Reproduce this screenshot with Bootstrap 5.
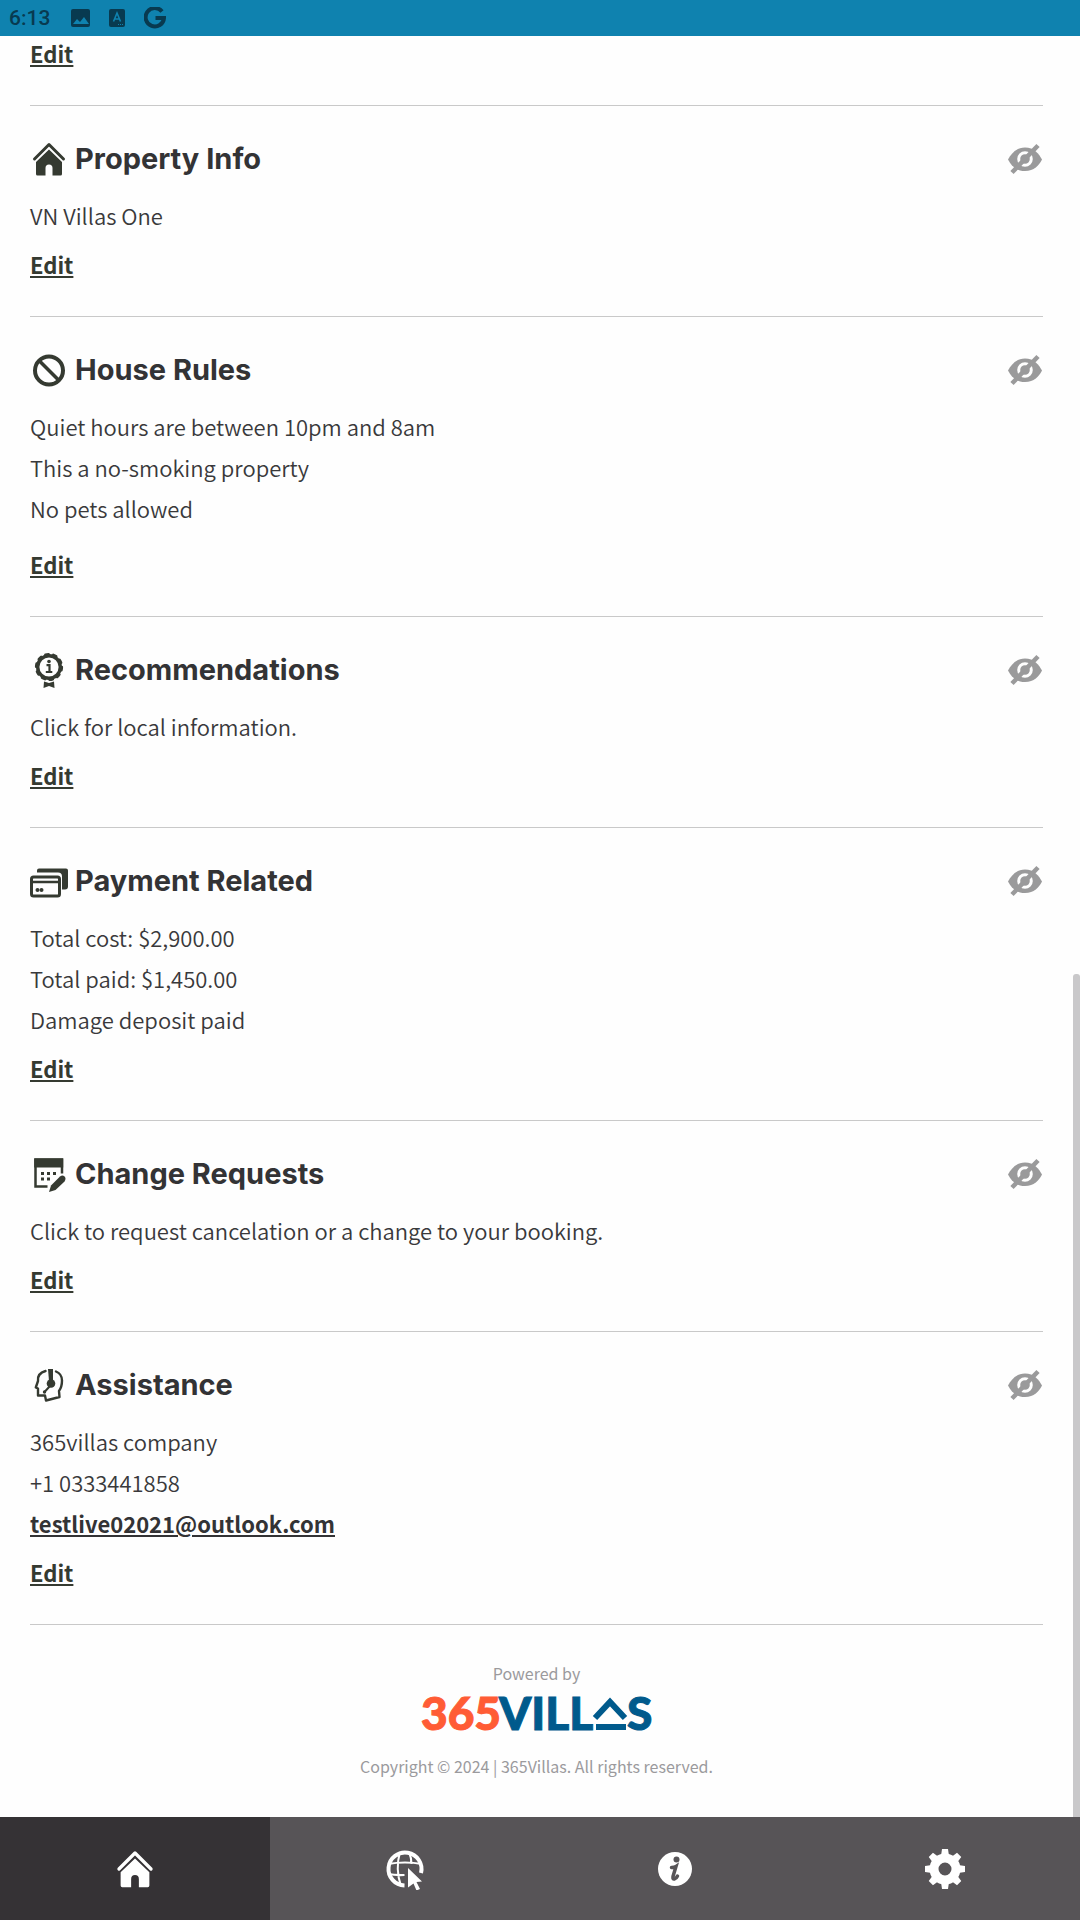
<!DOCTYPE html>
<html lang="en">
<head>
<meta charset="utf-8">
<meta name="viewport" content="width=device-width, initial-scale=1">
<title>365Villas guest portal</title>
<link href="https://cdn.jsdelivr.net/npm/bootstrap@5.3.0/dist/css/bootstrap.min.css" rel="stylesheet">
<style>
  body { font-family: "Noto Sans CJK SC", "Noto Sans", sans-serif; font-size: 22px; font-weight: 350; line-height: 41px; color: #39393b; background: #fefefe; }
  .status-bar { height: 36px; padding: 0 9px; background: #0f82af; color: #083a50; font-family: Roboto, sans-serif; font-size: 21px; font-weight: 500; line-height: 36px; z-index: 1031; }
  .status-icons { margin-left: 20px; gap: 19px; }
  .page-body { margin-right: 7px; padding: 38px 30px 103px; }
  .info-block { padding: 34px 0 37px; border-top: 1px solid #c9c9c9; }
  .info-block.first-block { padding-top: 0; border-top: 0; }
  .block-head { gap: 7px; margin-bottom: 17px; height: 38px; }
  .block-head svg { width: 38px; height: 38px; overflow: visible; color: #353a31; flex: none; }
  .block-head h2 { font-family: Inter, sans-serif; font-size: 29px; font-weight: 700; line-height: 36px; color: #333335; }
  .eye-btn svg { width: 36px; height: 32px; color: #9a9a9b; display: block; }
  .edit-link { display: block; width: fit-content; margin-top: 13px; line-height: 30px; color: #353a31; }
  .rules-list + .edit-link { margin-top: 20px; }
  .edit-link, .mail-link { font-weight: 700; text-decoration: underline; text-decoration-thickness: 2px; text-underline-offset: 2px; }
  .mail-link { color: #333335; }
  .site-footer { border-top: 1px solid #c9c9c9; padding: 37px 0 32px; font-size: 16px; font-weight: 400; line-height: 22px; color: #9b9a9d; }
  .brand-logo { width: 232px; height: 58px; margin-bottom: 13px; display: block; }
  .brand-logo text { font-family: Lato, sans-serif; font-weight: 900; font-size: 46px; stroke-width: 1px; }
  .tab-bar { height: 103px; background: #575457; }
  .tab-bar a { color: #fff; }
  .tab-bar a.active { background: #353235; }
  .tab-bar svg { width: 42px; height: 42px; }
  .scroll-thumb { right: 0; bottom: 103px; width: 7px; height: 43.9vh; background: #c9c8ca; border-radius: 3px 3px 0 0; }
</style>
<script src="https://cdn.jsdelivr.net/npm/bootstrap@5.3.0/dist/js/bootstrap.bundle.min.js"></script>
</head>
<body>
<svg class="d-none" aria-hidden="true">
  <symbol id="eye-off" viewBox="0 0 36 32">
    <path fill="currentColor" d="M1 16.500C4 11 9 4.500 18 4.500s14 6.500 17 12c-3 6-8 11.500-17 11.500S4 22.500 1 16.500z"/>
    <circle cx="18" cy="16" r="6.300" fill="currentColor" stroke="#fefefe" stroke-width="3"/>
    <path d="M5 29.500L31 2.500" stroke="currentColor" stroke-width="4.500"/>
  </symbol>
  <symbol id="house" viewBox="0 0 38 38">
    <path d="M4.500 19L19 4.500 33.500 19" fill="none" stroke="currentColor" stroke-width="3" stroke-linecap="round" stroke-linejoin="round"/>
    <path fill="currentColor" d="M19 9.500L32 22v12q0 1.500-1.500 1.500h-8V28q0-3.500-3.500-3.500T15.500 28v7.500h-8Q6 35.500 6 34V22z"/>
  </symbol>
</svg>

<header class="status-bar fixed-top d-flex align-items-center">
  <span>6:13</span>
  <div class="status-icons d-flex align-items-center">
    <svg width="20" height="20" viewBox="0 0 20 20"><rect x="1" y="1" width="19" height="18" rx="2" fill="currentColor"/><path d="M3 16l4-5 3 3 4-5 5 7z" fill="#0f82af"/></svg>
    <svg width="16" height="18" viewBox="0 0 16 18"><rect width="16" height="18" rx="2" fill="currentColor"/><path d="M4.500 12.500L8 4l3.500 8.500M6 10h4" fill="none" stroke="#0f82af" stroke-width="1.600"/><path d="M9 15.500h5" stroke="#0f82af" stroke-dasharray="1 1"/></svg>
    <svg width="22" height="22" viewBox="0 0 22 22"><path d="M18 4.500A9.200 9.200 0 1 0 20 11H11.500" fill="none" stroke="currentColor" stroke-width="4"/></svg>
  </div>
</header>

<main class="page-body">
  <section class="info-block first-block"><a class="edit-link mt-0" href="#">Edit</a></section>

  <section class="info-block">
    <div class="block-head d-flex align-items-center">
      <svg><use href="#house"/></svg>
      <h2 class="mb-0">Property Info</h2>
      <button type="button" class="eye-btn btn border-0 p-0 ms-auto" aria-label="Hide Property Info"><svg><use href="#eye-off"/></svg></button>
    </div>
    <p class="mb-0">VN Villas One</p>
    <a class="edit-link" href="#">Edit</a>
  </section>

  <section class="info-block">
    <div class="block-head d-flex align-items-center">
      <svg viewBox="0 0 38 38"><circle cx="19" cy="19.500" r="14" fill="none" stroke="currentColor" stroke-width="4"/><path d="M9 9.500l20 20" stroke="currentColor" stroke-width="3.500"/></svg>
      <h2 class="mb-0">House Rules</h2>
      <button type="button" class="eye-btn btn border-0 p-0 ms-auto" aria-label="Hide House Rules"><svg><use href="#eye-off"/></svg></button>
    </div>
    <div class="rules-list">
      <p class="mb-0">Quiet hours are between 10pm and 8am</p>
      <p class="mb-0">This a no-smoking property</p>
      <p class="mb-0">No pets allowed</p>
    </div>
    <a class="edit-link" href="#">Edit</a>
  </section>

  <section class="info-block">
    <div class="block-head d-flex align-items-center">
      <svg viewBox="0 0 38 38">
        <circle cx="19" cy="16" r="11.300" fill="none" stroke="currentColor" stroke-width="3.400"/>
        <circle cx="19" cy="16" r="12.800" fill="none" stroke="currentColor" stroke-width="2.600" stroke-linecap="round" stroke-dasharray="3.200 4.842"/>
        <circle cx="19" cy="10.500" r="1.800" fill="currentColor"/>
        <path d="M16.500 14.200h3v6.500M15.800 21h6.500" fill="none" stroke="currentColor" stroke-width="2.200"/>
        <path d="M14 30.500l5 1.500 5-1.500.5 6.500-5.500-2-5.500 2z" fill="currentColor"/>
      </svg>
      <h2 class="mb-0">Recommendations</h2>
      <button type="button" class="eye-btn btn border-0 p-0 ms-auto" aria-label="Hide Recommendations"><svg><use href="#eye-off"/></svg></button>
    </div>
    <p class="mb-0">Click for local information.</p>
    <a class="edit-link" href="#">Edit</a>
  </section>

  <section class="info-block">
    <div class="block-head d-flex align-items-center">
      <svg viewBox="0 0 38 38">
        <path d="M7 10.500V8.500q0-2 2-2h27q2 0 2 2v16q0 3-3 3h-3V14.500q0-4-4-4z" fill="currentColor"/>
        <rect x="1.500" y="15" width="28" height="19" rx="2" fill="none" stroke="currentColor" stroke-width="3"/>
        <path d="M1 20h29" stroke="currentColor" stroke-width="2.500"/>
        <circle cx="7.500" cy="28" r="2" fill="currentColor"/><circle cx="11.500" cy="28" r="2" fill="currentColor"/>
      </svg>
      <h2 class="mb-0">Payment Related</h2>
      <button type="button" class="eye-btn btn border-0 p-0 ms-auto" aria-label="Hide Payment Related"><svg><use href="#eye-off"/></svg></button>
    </div>
    <p class="mb-0">Total cost: $2,900.00</p>
    <p class="mb-0">Total paid: $1,450.00</p>
    <p class="mb-0">Damage deposit paid</p>
    <a class="edit-link" href="#">Edit</a>
  </section>

  <section class="info-block">
    <div class="block-head d-flex align-items-center">
      <svg viewBox="0 0 38 38">
        <path d="M17.500 31.500H5.500V4.500h26.500v14" fill="none" stroke="currentColor" stroke-width="2.500"/>
        <path d="M4.200 3.500h29v9h-29z" fill="currentColor"/>
        <path d="M11 18.500h16M11 24h10" stroke="currentColor" stroke-width="3" stroke-dasharray="3 3"/>
        <path d="M21 30.500L30 21.500q2.500-2 4.500 0t0 5l-9 8.500-6.500 2z" fill="currentColor"/>
      </svg>
      <h2 class="mb-0">Change Requests</h2>
      <button type="button" class="eye-btn btn border-0 p-0 ms-auto" aria-label="Hide Change Requests"><svg><use href="#eye-off"/></svg></button>
    </div>
    <p class="mb-0">Click to request cancelation or a change to your booking.</p>
    <a class="edit-link" href="#">Edit</a>
  </section>

  <section class="info-block">
    <div class="block-head d-flex align-items-center">
      <svg viewBox="0 0 38 38">
        <path d="M15.500 5C10 6.500 7.500 10.500 8 15l-2.200 6.500 2.200 1v7h7l1 5 13.500-3.500-.5-6q3-4 3-10.500 0-6.500-6-9" fill="none" stroke="currentColor" stroke-width="2.400" stroke-linejoin="round" stroke-linecap="round"/>
        <path d="M18 3h5v12h-4z" fill="currentColor"/><circle cx="21" cy="17.500" r="4.300" fill="currentColor"/>
        <path d="M20 20l-5.500 6" stroke="currentColor" stroke-width="2" stroke-linecap="round"/><circle cx="14.500" cy="26" r="1.700" fill="currentColor"/>
      </svg>
      <h2 class="mb-0">Assistance</h2>
      <button type="button" class="eye-btn btn border-0 p-0 ms-auto" aria-label="Hide Assistance"><svg><use href="#eye-off"/></svg></button>
    </div>
    <p class="mb-0">365villas company</p>
    <p class="mb-0">+1 0333441858</p>
    <p class="mb-0"><a class="mail-link" href="mailto:testlive02021@outlook.com">testlive02021@outlook.com</a></p>
    <a class="edit-link" href="#">Edit</a>
  </section>

  <footer class="site-footer d-flex flex-column align-items-center">
    <div>Powered by</div>
    <svg class="brand-logo" viewBox="0 -11 232 58" role="img" aria-label="365VILLAS">
      <text x="0" y="35" fill="#ff5c35" stroke="#ff5c35">365</text>
      <text x="78" y="35" fill="#005a8c" stroke="#005a8c">VILL</text>
      <path d="M174 23l15-16 15 16" fill="none" stroke="#005a8c" stroke-width="6"/>
      <path d="M175 32h30" stroke="#005a8c" stroke-width="6"/>
      <text x="206" y="35" fill="#005a8c" stroke="#005a8c">S</text>
    </svg>
    <div>Copyright © 2024 | 365Villas. All rights reserved.</div>
  </footer>
</main>

<div class="scroll-thumb position-fixed"></div>

<nav class="tab-bar fixed-bottom d-flex">
  <a class="active flex-fill d-flex align-items-center justify-content-center" href="#" aria-label="Home"><svg><use href="#house"/></svg></a>
  <a class="flex-fill d-flex align-items-center justify-content-center" href="#" aria-label="Website">
    <svg viewBox="0 0 42 42" fill="none" stroke="currentColor" stroke-width="2">
      <path d="M20.500 37.500A16.500 16.500 0 1 1 37 25" stroke-width="4"/>
      <path d="M16 4q-5 17 1 34M25 4q2.500 6 2.500 12M4 16q17-3 34 0M4 26q8 1.500 16.500 1"/>
      <path d="M24 20l14 13.500-5.500.5 3.500 7-3.500 1.500-3-7-5.500 4z" fill="currentColor" stroke="none"/>
    </svg>
  </a>
  <a class="flex-fill d-flex align-items-center justify-content-center" href="#" aria-label="Information">
    <svg viewBox="0 0 42 42">
      <circle cx="21" cy="21" r="17" fill="currentColor"/>
      <circle cx="22.500" cy="11.500" r="3" fill="#575457"/>
      <path d="M17.500 19.500q3 0 4.500-1l-3 10q-.5 3 1.500 2.500 2-.8 3-3" fill="none" stroke="#575457" stroke-width="3.500" stroke-linecap="round"/>
    </svg>
  </a>
  <a class="flex-fill d-flex align-items-center justify-content-center" href="#" aria-label="Settings">
    <svg viewBox="0 0 42 42">
      <circle cx="21" cy="21" r="11" fill="none" stroke="currentColor" stroke-width="9"/>
      <g fill="currentColor">
        <path id="tooth" d="M17 8l1-7h6l1 7zM17 34l1 7h6l1-7z"/>
        <use href="#tooth" transform="rotate(45 21 21)"/>
        <use href="#tooth" transform="rotate(90 21 21)"/>
        <use href="#tooth" transform="rotate(135 21 21)"/>
      </g>
    </svg>
  </a>
</nav>
</body>
</html>
